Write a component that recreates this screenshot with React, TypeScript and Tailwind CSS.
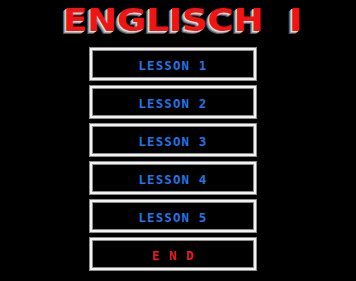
import React from 'react';

const lessons = ['LESSON 1', 'LESSON 2', 'LESSON 3', 'LESSON 4', 'LESSON 5'];

function MenuButton({ label, end }: { label: string; end?: boolean }) {
  return (
    <div className="flex h-[34px] w-[168px] items-center justify-center border border-[#8c8c8c] bg-black shadow-[inset_0_0_0_2px_#f2f2f2,inset_0_0_0_3px_#8a8a8a]">
      <span
        className={`pt-[4px] font-['DejaVu_Sans_Mono',monospace] text-[12.5px] font-bold leading-none ${
          end ? 'tracking-[9.5px] pl-[9px] text-[#e21f1f]' : 'tracking-[1.1px] text-[#2275e6]'
        }`}
      >
        {label}
      </span>
    </div>
  );
}

export default function App() {
  return (
    <div className="h-[281px] w-[356px] overflow-hidden bg-black">
      <div className="flex h-[44px] items-start pl-[63px] pt-[1px]">
        <h1 className="flex origin-left scale-x-[1.11] font-['DejaVu_Sans',sans-serif] text-[32px] font-bold leading-[38px] tracking-[0px] text-[#f01414] [text-shadow:-1px_1px_0_#e6e6e6,-2px_2px_0_#a8a8a8,-3px_3px_0_#5a5a5a]">
          <span>ENGLISCH</span>
          <span className="ml-[23px]">I</span>
        </h1>
      </div>
      <div className="ml-[89px] mt-[3px] flex flex-col gap-[4px]">
        {lessons.map((l) => (
          <MenuButton key={l} label={l} />
        ))}
        <MenuButton label="END" end />
      </div>
    </div>
  );
}
